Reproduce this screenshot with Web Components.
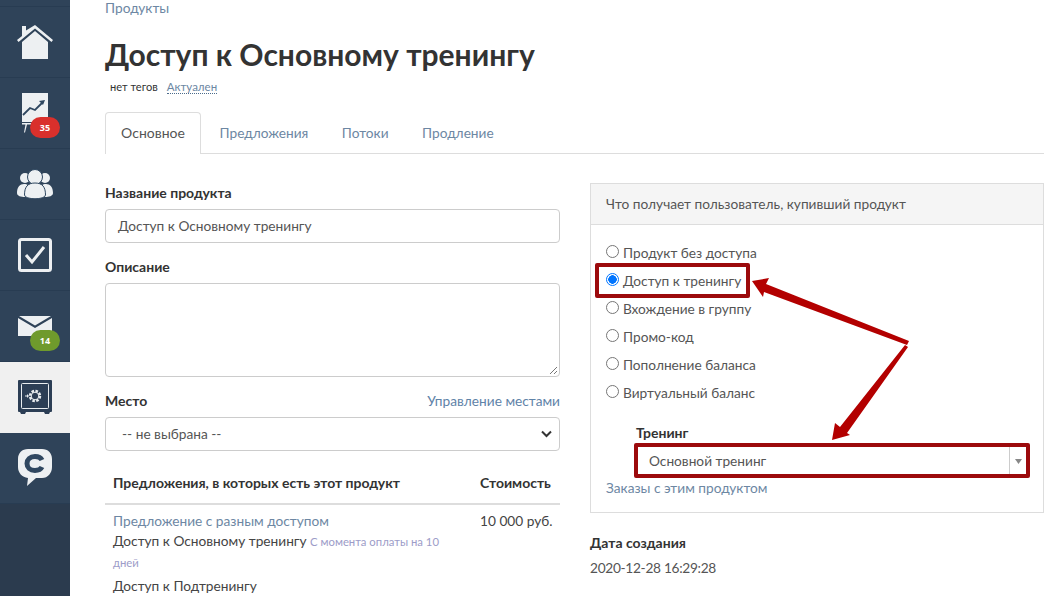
<!DOCTYPE html>
<html lang="ru"><head><meta charset="utf-8"><title>Продукт</title>
<style>
html,body{margin:0;padding:0;height:100%;overflow:hidden;background:#fff}
body{font:13.7px/20px Lato,"Open Sans","Noto Sans",sans-serif;color:#333}
</style></head><body>
<app-shell>
  <side-nav slot="nav"></side-nav>
  <page-header title-text="Доступ к Основному тренингу"></page-header>
  <product-tabs></product-tabs>
  <div slot="left"><product-form></product-form></div>
  <div slot="right"><access-panel></access-panel></div>
</app-shell>
<script>
const def=(n,html)=>customElements.define(n,class extends HTMLElement{constructor(){super();this.attachShadow({mode:'open'}).innerHTML=typeof html==='function'?html(this):html;}});

def('app-shell',`<style>
:host{display:flex;width:1054px;height:596px;overflow:hidden;position:relative}
main{flex:1;padding:0 10px 0 35px;min-width:0}
.cols{display:flex;gap:30px;margin-top:29px}
.l{width:455px;flex:none}.r{width:454px;flex:none}
</style>
<slot name="nav"></slot>
<main><slot></slot><div class="cols"><div class="l"><slot name="left"></slot></div><div class="r"><slot name="right"></slot></div></div></main>
<svg style="position:absolute;left:0;top:0;pointer-events:none" width="1054" height="596" viewBox="0 0 1054 596">
<g fill="none" stroke="#9c0a0c" stroke-width="4" stroke-linejoin="round">
<rect x="597" y="265" width="151" height="31"/>
<rect x="636" y="445" width="392" height="31"/>
</g>
<g fill="#b30000">
<polygon points="752,281 769,278 766,284 909,341 907,345 764,292 763,297"/>
<polygon points="832,440 835,423 840,427 905,345 908,347 847,433 850,435"/>
</g></svg>`);

const icons={
home:`<svg width="36" height="34" viewBox="0 0 36 34"><path fill="#edf0f2" d="M5 1h4v4.500L18 0l18 15-1.500 2L18 3.500 1.500 17 0 15l5-4zM5 17 18 6l13 11v17H5z"/></svg>`,
chart:`<svg width="26" height="40" viewBox="0 0 26 40"><path fill="#edf0f2" d="M0 0h26v29H0z"/><path d="M1 22l7-7 5 2 8-8" fill="none" stroke="#2f4760" stroke-width="1.800"/><path d="M23 7l-6 1 4 4z" fill="#2f4760"/><path fill="#edf0f2" d="M0 30h9v1.500H5l-2 8H2l1.500-8H0z"/></svg>`,
users:`<svg width="36" height="31" viewBox="0 0 36 31"><g fill="#edf0f2"><circle cx="8" cy="9" r="5"/><circle cx="28" cy="9" r="5"/><path d="M0 24c0-6 3-9 7-9 2 0 3 .5 4 1-2 3-3 7-3 12-4 0-8-1-8-4zM36 24c0-6-3-9-7-9-2 0-3 .5-4 1 2 3 3 7 3 12 4 0 8-1 8-4z"/></g><circle cx="18" cy="8" r="7.500" fill="#edf0f2" stroke="#2f4760"/><path fill="#edf0f2" stroke="#2f4760" d="M7.500 26c0-8 3-12 10.500-12s10.500 4 10.500 12c0 5-21 5-21 0z"/></svg>`,
check:`<svg width="34" height="34" viewBox="0 0 34 34"><rect x="1.500" y="1.500" width="31" height="31" rx="2" fill="none" stroke="#edf0f2" stroke-width="3"/><path d="M8 17l6 7L26 9" fill="none" stroke="#edf0f2" stroke-width="3"/></svg>`,
mail:`<svg width="34" height="20" viewBox="0 0 34 20"><path fill="#edf0f2" d="M0 2l17 10L34 2v18H0zM1 0h32L17 9.500z"/></svg>`,
safe:`<svg width="34" height="34" viewBox="0 0 34 34"><path fill="#2c3e55" d="M1 0h32a1 1 0 011 1v30a1 1 0 01-1 1h-1l-1 2h-4l-1-2H8l-1 2H3l-1-2H1a1 1 0 01-1-1V1a1 1 0 011-1z"/><rect x="3.500" y="3.500" width="27" height="25" rx="1" fill="none" stroke="#e8ecef"/><circle cx="17" cy="16" r="5" fill="none" stroke="#e8ecef" stroke-width="2.500" stroke-dasharray="2.500 1.400"/><circle cx="17" cy="16" r="3.800" fill="none" stroke="#e8ecef"/><path d="M7 16h2.500" stroke="#e8ecef"/><path d="M9 14l2 2-2 2z" fill="#e8ecef"/></svg>`,
chat:`<svg width="34" height="38" viewBox="0 0 34 38"><path fill="#edf0f2" d="M10 0h14c6 0 10 4 10 10v8c0 6-4 11-10 11h-6l-9 8 1-8C4 28 0 24 0 18v-8C0 4 4 0 10 0z"/><path d="M24 11c-1-2-3.500-3.500-7-3.500-5 0-8 3-8 7s3 7 8 7c3.500 0 6-1.500 7-3.500" fill="none" stroke="#2f4760" stroke-width="5"/></svg>`};

def('nav-item',h=>{const b=h.getAttribute('badge');return `<style>
:host{display:flex;align-items:center;justify-content:center;height:70px;border-bottom:1px solid #283c52;position:relative}
:host([active]){background:#f0f0f0;border-bottom-color:#f0f0f0}
.b{position:absolute;left:30px;top:var(--bt,39px);width:30px;height:21px;border-radius:11px;background:var(--bc,#d9302c);color:#fff;font:bold 9px/21px "Open Sans",sans-serif;text-align:center}
</style>${icons[h.getAttribute('icon')]}${b?`<span class="b" style="--bc:${h.getAttribute('color')};--bt:${h.getAttribute('top')}px">${b}</span>`:''}`});

def('side-nav',`<style>
:host{display:block;width:70px;flex:none;height:596px;background:#2b3b4e}
.top{height:6px;border-bottom:1px solid #283c52;background:#2f4359}
nav-item{background:#2f4359}
nav-item[active]{background:#f0f0f0}
</style><div class="top"></div>
<nav-item icon="home"></nav-item>
<nav-item icon="chart" badge="35" color="#d9302c" top="39"></nav-item>
<nav-item icon="users"></nav-item>
<nav-item icon="check"></nav-item>
<nav-item icon="mail" badge="14" color="#6f9a2c" top="39"></nav-item>
<nav-item icon="safe" active></nav-item>
<nav-item icon="chat"></nav-item>`);

def('page-header',h=>`<style>
:host{display:block}
a{color:#6d87a3;text-decoration:none}
.bc{height:16px;line-height:16px}
h1{margin:23px 0 0;font-size:30px;line-height:30px;font-weight:700;color:#333}
.meta{margin:8px 0 0 5px;height:20px;font-size:11.100px;line-height:20px;color:#333;display:flex;gap:9px}
.meta a{border-bottom:1px dotted #4a6a8a;line-height:13px;height:13px;margin-top:3px;font-size:11.500px}
</style><div class="bc"><a href="#">Продукты</a></div>
<h1>${h.getAttribute('title-text')}</h1>
<div class="meta"><span>нет тегов</span><a href="#">Актуален</a></div>`);

def('product-tabs',`<style>
:host{display:flex;height:41px;margin-top:15px;border-bottom:1px solid #ddd;color:#6d87a3}
span{padding:0 15px;line-height:41px;margin-right:3.500px}
.on{color:#555;background:#fff;border:1px solid #ddd;border-bottom:0;border-radius:4px 4px 0 0;height:42px;width:96px;text-align:center;box-sizing:border-box;padding:0;line-height:40px;font-size:14px}
</style><span class="on">Основное</span><span>Предложения</span><span>Потоки</span><span>Продление</span>`);

def('product-form',`<style>
:host{display:block}
.lb{display:block;font-weight:700;font-size:14px;color:#333;height:20px;line-height:20px}
.f{box-sizing:border-box;width:100%;border:1px solid #ccc;border-radius:4px;background:#fff;display:block;color:#555;font:inherit;padding:0 12px;margin-top:6px}
.i{height:34px;line-height:32px}
.t{height:94px;position:relative}
.grip{position:absolute;right:1px;bottom:1px}
.row{display:flex;justify-content:space-between;margin-top:14px}
.row a{color:#5f83a8;text-decoration:none}
.s{height:34px;line-height:31px;display:flex;justify-content:space-between;align-items:center;padding:0 7px 1px 16px}
.mt{margin-top:14px}
table{border-collapse:collapse;width:100%;margin-top:22px;table-layout:fixed}
th{font-weight:700;font-size:14px;text-align:left;padding:0 8px;height:30px;line-height:20px;vertical-align:top;border-bottom:2px solid #ddd;color:#333;white-space:nowrap}
td{padding:6px 8px 0;vertical-align:top;color:#444;line-height:20px}
td a{color:#6d87a3;text-decoration:none}
td:last-child{white-space:nowrap}
small{font-size:11.300px;color:#9c9cc8;line-height:20px}
</style>
<div class="lb">Название продукта</div>
<div class="f i">Доступ к Основному тренингу</div>
<div class="lb mt">Описание</div>
<div class="f t"><svg class="grip" width="10" height="10" viewBox="0 0 10 10"><path d="M9 2L2 9M9 6L6 9" stroke="#777"/></svg></div>
<div class="row"><span class="lb">Место</span><a href="#">Управление местами</a></div>
<div class="f s"><span>-- не выбрана --</span><svg width="11" height="8" viewBox="0 0 11 8"><path d="M1 1.500l4.500 4.500L10 1.500" fill="none" stroke="#333" stroke-width="2"/></svg></div>
<table><colgroup><col style="width:367px"><col></colgroup>
<tr><th>Предложения, в которых есть этот продукт</th><th>Стоимость</th></tr>
<tr><td><a href="#">Предложение с разным доступом</a><div>Доступ к Основному тренингу <small>С момента оплаты на 10 дней</small></div><div style="margin-top:3px">Доступ к Подтренингу</div></td><td>10 000 руб.</td></tr>
</table>`);

def('radio-row',h=>`<style>
:host{display:flex;align-items:center;height:28px;gap:4px;color:#555}
i{box-sizing:border-box;width:13px;height:13px;border-radius:50%;border:1px solid #767676;background:#fff;display:block;margin-top:-3px;flex:none}
:host([checked]) i{border:1px solid #0075ff;background:radial-gradient(circle,#0075ff 0 4px,#fff 4.500px)}
</style><i></i><slot></slot>`);

def('access-panel',`<style>
:host{display:block}
.p{border:1px solid #ddd;box-sizing:border-box;height:330px}
.h{height:40px;line-height:39px;background:#f5f5f5;border-bottom:1px solid #ddd;padding:0 15px;color:#555}
.b{padding:14px 15px 0}
.tr{margin:16px 0 0 30px}
.tr b{display:block;height:20px;color:#333;font-size:14px}
.sel{height:30px;border:1px solid #ccc;display:flex;align-items:center;justify-content:space-between;color:#555;padding-left:12px;box-sizing:border-box;margin-top:3px}
.sel u{width:17px;height:28px;border-left:1px solid #ccc;display:flex;align-items:center;justify-content:center;text-decoration:none}
a{color:#6d87a3;text-decoration:none;display:block;margin-top:2px}
.d{margin-top:20px}.d b{display:block;color:#333;font-size:14px}.d div{margin-top:5px;color:#555;letter-spacing:-.3px}
</style>
<div class="p"><div class="h">Что получает пользователь, купивший продукт</div>
<div class="b">
<radio-row>Продукт без доступа</radio-row>
<radio-row checked>Доступ к тренингу</radio-row>
<radio-row>Вхождение в группу</radio-row>
<radio-row>Промо-код</radio-row>
<radio-row>Пополнение баланса</radio-row>
<radio-row>Виртуальный баланс</radio-row>
<div class="tr"><b>Тренинг</b><div class="sel"><span>Основной тренинг</span><u><svg width="7" height="5" viewBox="0 0 7 5"><path d="M0 0h7L3.500 5z" fill="#888"/></svg></u></div></div>
<a href="#">Заказы с этим продуктом</a>
</div></div>
<div class="d"><b>Дата создания</b><div>2020-12-28 16:29:28</div></div>`);
</script>
</body></html>
